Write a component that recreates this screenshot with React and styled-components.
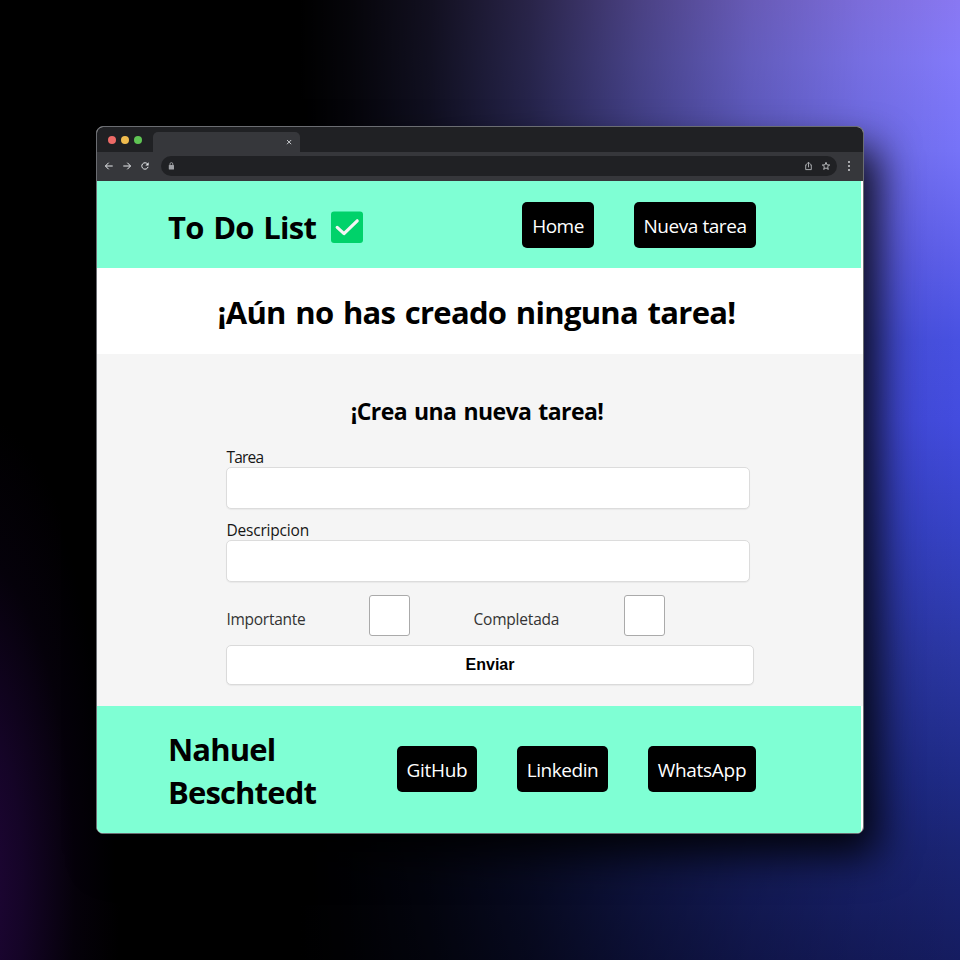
import React from 'react';
import styled, { createGlobalStyle } from 'styled-components';

const GlobalStyle = createGlobalStyle`
  *, *::before, *::after { box-sizing: border-box; }
  body { margin: 0; background: #000; font-family: "Open Sans", "Noto Sans", sans-serif; color: #000; }
  h1, h2, h3, p { margin: 0; }
`;

const Backdrop = styled.div`
  width: 960px;
  height: 960px;
  overflow: hidden;
  padding: 126px 96px;
  background:
    radial-gradient(ellipse 150px 480px at -30px 890px, #22063c 0%, rgba(30, 6, 56, 0.7) 35%, rgba(20, 4, 40, 0.25) 70%, transparent 100%),
    linear-gradient(to right, #000 300px, rgba(0,0,0,0.96) 350px, rgba(0,0,0,0.87) 430px, rgba(0,0,0,0.7) 530px, rgba(0,0,0,0.46) 640px, rgba(0,0,0,0.25) 750px, rgba(0,0,0,0.1) 860px, transparent 960px),
    linear-gradient(to bottom, #8978f2 0, #837afa 60px, #7673f8 150px, #5f60ec 250px, #4851e2 340px, #434cdf 420px, #3642c6 530px, #2a36a2 660px, #1e2a86 780px, #1a2474 850px, #151c60 960px);
`;

const BrowserWindow = styled.div`
  width: 768px;
  height: 708px;
  display: flex;
  flex-direction: column;
  border: 1px solid #6b6d72;
  border-radius: 7px;
  overflow: hidden;
  background: #fff;
  box-shadow: 14px 22px 40px rgba(0, 0, 0, 0.88);
`;

const TabStrip = styled.div`
  flex: none;
  height: 25px;
  display: flex;
  align-items: flex-end;
  padding-left: 11px;
  background: #202124;
`;

const Lights = styled.div`
  display: flex;
  align-self: center;
  gap: 5px;
  padding-top: 1px;
  width: 45px;
`;

const Light = styled.span`
  width: 8px;
  height: 8px;
  border-radius: 50%;
  background: ${({ $color }) => $color};
`;

const Tab = styled.div`
  width: 147px;
  height: 20px;
  display: flex;
  align-items: center;
  justify-content: flex-end;
  padding-right: 7px;
  border-radius: 5px 5px 0 0;
  background: #36373b;
`;

const Toolbar = styled.div`
  flex: none;
  height: 29px;
  display: flex;
  align-items: center;
  padding: 0 11px 1px 7px;
  background: #36373b;
`;

const NavIcons = styled.div`
  display: flex;
  gap: 8px;
  width: 57px;
`;

const AddressBar = styled.div`
  flex: 1;
  height: 20px;
  display: flex;
  align-items: center;
  justify-content: space-between;
  padding: 0 6px 0 7px;
  margin-right: 9px;
  border-radius: 10px;
  background: #202124;
`;

const AddressActions = styled.div`
  display: flex;
  gap: 8px;
`;

const Glyph = styled.svg`
  flex: none;
  display: block;
  overflow: visible;
`;

const Banner = styled.div`
  flex: none;
  height: ${({ $height }) => $height}px;
  margin-right: 2px;
  display: flex;
  align-items: center;
  justify-content: space-between;
  padding: 0 105px ${({ $lift = 0 }) => $lift}px 71px;
  background: #7fffd4;
`;

const Title = styled.h1`
  display: flex;
  align-items: center;
  padding-top: ${({ $drop = 0 }) => $drop}px;
  font-size: 31px;
  line-height: 43px;
  font-weight: 700;
  letter-spacing: ${({ $track }) => $track}px;
  word-spacing: 2.2px;
  white-space: nowrap;
`;

const TitleMark = styled(Glyph)`
  margin-left: 15px;
`;

const Stack = styled.div`
  display: flex;
  flex-direction: column;
`;

const Nav = styled.nav`
  display: flex;
  gap: 40px;
`;

const NavLink = styled.a`
  width: ${({ $width }) => $width}px;
  height: 46px;
  display: flex;
  align-items: center;
  justify-content: center;
  padding-top: 2px;
  border-radius: 5px;
  background: #000;
  color: #fff;
  font-size: 19px;
  letter-spacing: ${({ $track }) => $track}px;
  white-space: nowrap;
`;

const Notice = styled.section`
  flex: none;
  height: 86px;
  display: flex;
  align-items: center;
  justify-content: center;
  padding: 2px 7px 0 0;
`;

const FormSection = styled.section`
  flex: none;
  height: 352px;
  padding: 42px 109px 0 129px;
  background: #f5f5f5;
`;

const FormTitle = styled.h2`
  height: 31px;
  padding-right: 26px;
  text-align: center;
  font-size: 23px;
  line-height: 31px;
  letter-spacing: -0.57px;
  word-spacing: 1.6px;
`;

const Field = styled.label`
  display: flex;
  flex-direction: column;
  width: 524px;
  margin-top: ${({ $gap }) => $gap}px;
`;

const LabelText = styled.span`
  padding-left: 0.5px;
  font-size: 15.5px;
  line-height: 20px;
  color: ${({ $soft }) => ($soft ? '#333' : '#161616')};
  letter-spacing: ${({ $track = 0 }) => $track}px;
`;

const TextInput = styled.input`
  width: 524px;
  height: 42px;
  padding: 0 10px;
  border: 1px solid #dcdcdc;
  border-radius: 5px;
  background: #fff;
  box-shadow: 0 1px 1px rgba(0, 0, 0, 0.05);
  outline: none;
`;

const CheckRow = styled.div`
  display: grid;
  grid-template-columns: 143px 104px 151px 41px;
  margin-top: 13px;
  height: 41px;
`;

const CheckLabel = styled(LabelText)`
  padding-top: 14px;
`;

const Checkbox = styled.input.attrs({ type: 'checkbox' })`
  appearance: none;
  width: 41px;
  height: 41px;
  margin: 0;
  border: 1.5px solid #aaa;
  border-radius: 3px;
  background: #fff;
`;

const Submit = styled.button`
  display: block;
  width: 528px;
  height: 40px;
  margin-top: 9px;
  padding: 0;
  border: 1px solid #dadada;
  border-radius: 5px;
  background: #fff;
  color: #000;
  font: 700 16px "Liberation Sans", Arial, sans-serif;
  box-shadow: 0 1px 1px rgba(0, 0, 0, 0.05);
`;

function CheckMark() {
  return (
    <TitleMark width="32" height="32" viewBox="0 0 32 32">
      <rect y="0.5" width="32" height="31.5" rx="3" fill="#00d26a" />
      <path d="M6.2 16.4L13 22.6L26.2 9.8" fill="none" stroke="#f4f4f4" strokeWidth="3.2" strokeLinecap="round" strokeLinejoin="round" />
    </TitleMark>
  );
}

function Stroke({ size = 10, color = '#e8eaed', children }) {
  return (
    <Glyph width={size} height={size} viewBox="0 0 10 10" fill="none" stroke={color} strokeWidth="1">
      {children}
    </Glyph>
  );
}

export default function App() {
  return (
    <>
      <GlobalStyle />
      <Backdrop>
        <BrowserWindow>
          <TabStrip>
            <Lights>
              <Light $color="#ed6a67" />
              <Light $color="#f0bb4e" />
              <Light $color="#5fc454" />
            </Lights>
            <Tab>
              <Glyph width="8" height="8" viewBox="0 0 8 8" stroke="#c5c7ca" strokeWidth="1">
                <path d="M2 2L6.2 6.2M6.2 2L2 6.2" />
              </Glyph>
            </Tab>
          </TabStrip>
          <Toolbar>
            <NavIcons>
              <Stroke><path d="M8.7 5H1.6M4.7 1.7L1.4 5L4.7 8.3" /></Stroke>
              <Stroke><path d="M1.3 5H8.4M5.3 1.7L8.6 5L5.3 8.3" /></Stroke>
              <Stroke>
                <path d="M7.6 3.1A3.2 3.2 0 1 0 8.1 5.8" />
                <path d="M8.6 1.2V4.4H5.4Z" fill="#e8eaed" stroke="none" />
              </Stroke>
            </NavIcons>
            <AddressBar>
              <Glyph width="7" height="8" viewBox="0 0 7 8">
                <rect x="0.8" y="3" width="5.2" height="4.6" rx="0.5" fill="#9fa1a5" />
                <path d="M2 3.2V2A1.4 1.4 0 0 1 4.8 2V3.2" fill="none" stroke="#9fa1a5" strokeWidth="0.9" />
              </Glyph>
              <AddressActions>
                <Glyph width="9" height="10" viewBox="0 0 9 10" fill="none" stroke="#b6b8bb" strokeWidth="0.9">
                  <path d="M3 3.8H1.7V8.6H7.3V3.8H6M4.5 6.4V1.4M2.9 2.8L4.5 1.2L6.1 2.8" />
                </Glyph>
                <Glyph width="10" height="10" viewBox="0 0 10 10" fill="none" stroke="#c5c7ca" strokeWidth="0.9">
                  <path d="M5 1.3L6 3.9L8.7 4L6.6 5.7L7.3 8.4L5 6.9L2.7 8.4L3.4 5.7L1.3 4L4 3.9Z" />
                </Glyph>
              </AddressActions>
            </AddressBar>
            <Glyph width="6" height="12" viewBox="0 0 6 12" fill="#d0d2d5">
              <circle cx="3" cy="2" r="1" />
              <circle cx="3" cy="6" r="1" />
              <circle cx="3" cy="10" r="1" />
            </Glyph>
          </Toolbar>

          <Banner as="header" $height={87}>
            <Title $track={-0.75} $drop={5}>
              To Do List
              <CheckMark />
            </Title>
            <Nav>
              <NavLink $width={72} $track={-0.5}>Home</NavLink>
              <NavLink $width={122} $track={-0.44}>Nueva tarea</NavLink>
            </Nav>
          </Banner>

          <Notice>
            <Title $track={-0.72}>¡Aún no has creado ninguna tarea!</Title>
          </Notice>

          <FormSection>
            <FormTitle>¡Crea una nueva tarea!</FormTitle>
            <form>
              <Field $gap={20}>
                <LabelText $track={-0.8}>Tarea</LabelText>
                <TextInput />
              </Field>
              <Field $gap={11}>
                <LabelText $track={-0.2}>Descripcion</LabelText>
                <TextInput />
              </Field>
              <CheckRow>
                <CheckLabel $soft $track={-0.28}>Importante</CheckLabel>
                <Checkbox aria-label="Importante" />
                <CheckLabel $soft $track={-0.2}>Completada</CheckLabel>
                <Checkbox aria-label="Completada" />
              </CheckRow>
              <Submit type="button">Enviar</Submit>
            </form>
          </FormSection>

          <Banner as="footer" $height={127} $lift={1}>
            <Stack>
              <Title $track={-0.85} $drop={3}>Nahuel</Title>
              <Title $track={-0.85}>Beschtedt</Title>
            </Stack>
            <Nav>
              <NavLink $width={80} $track={-0.3}>GitHub</NavLink>
              <NavLink $width={91} $track={-0.43}>Linkedin</NavLink>
              <NavLink $width={108} $track={-0.3}>WhatsApp</NavLink>
            </Nav>
          </Banner>
        </BrowserWindow>
      </Backdrop>
    </>
  );
}
